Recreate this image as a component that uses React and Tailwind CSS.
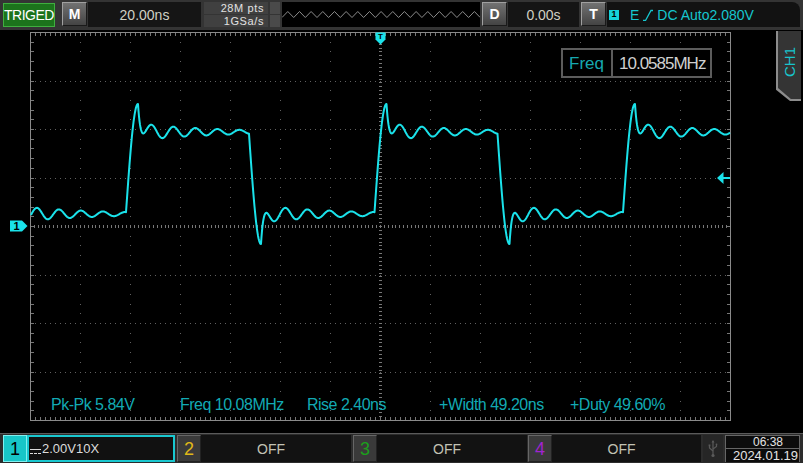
import React from "react";

const WAVE = "#1ae2ea";
const MEAS = "#12aab4";

const GX0 = 30;
const GX1 = 730;
const GY0 = 32;
const GY1 = 420;
const DIVX = 50;
const DIVY = 48.5;

// square wave with ringing, sampled in page coordinates
function wavePath() {
  const P = 248.5;
  const R0 = 130;
  const F0 = 253;
  const H = 132;
  const L = 214;
  const A = 9.5;
  const edges = [];
  for (let k = -2; k <= 3; k++) {
    edges.push({ x: R0 + k * P, rise: true });
    edges.push({ x: F0 + k * P, rise: false });
  }
  edges.sort((a, b) => a.x - b.x);

  const settled = (e, t) => {
    const ring =
      (e.rise ? 34.5 : 36.5) * Math.exp(-(t - 8) / 2.5) +
      A * Math.exp(-t / 75) * Math.cos((2 * Math.PI * (t - 21.5)) / 22);
    return e.rise ? H - ring : L + ring;
  };

  const yAt = (x) => {
    let i = edges.length - 1;
    while (i > 0 && edges[i].x - 4 > x) i--;
    const e = edges[i];
    const t = x - e.x;
    if (t >= 8) return settled(e, t);
    const p = edges[i - 1];
    const prev = settled(p, e.x - 4 - p.x);
    const peak = settled(e, 8);
    const s = Math.min(1, Math.max(0, (t + 4) / 12));
    return prev + (peak - prev) * Math.sin((s * Math.PI) / 2);
  };

  let d = "";
  for (let x = GX0 + 1; x <= GX1; x += 0.5) {
    d += `${d ? "L" : "M"}${x.toFixed(1)} ${yAt(x).toFixed(1)}`;
  }
  return d;
}

function gridDots() {
  let d = "";
  for (let k = 1; k < 14; k++) {
    if (k === 7) continue;
    const x = GX0 + k * DIVX;
    for (let j = 1; j < 40; j++) {
      const y = Math.round(GY0 + (j * DIVY) / 5);
      d += `M${x} ${y + 0.5}h1`;
    }
  }
  for (let k = 1; k < 8; k++) {
    if (k === 4) continue;
    const y = Math.round(GY0 + k * DIVY);
    for (let x = GX0 + 5; x < GX1; x += 5) {
      d += `M${x} ${y + 0.5}h1`;
    }
  }
  return d;
}

function gridTicks() {
  let d = "";
  for (let x = GX0 + 5; x < GX1; x += 5) {
    d += `M${x + 0.5} ${GY0 + 1}v3M${x + 0.5} ${GY1 - 3}v3`;
  }
  for (let j = 1; j < 40; j++) {
    const y = Math.round(GY0 + (j * DIVY) / 5) + 0.5;
    d += `M${GX0 + 1} ${y}h3M${GX1 - 3} ${y}h3`;
  }
  const cy = GY0 + 4 * DIVY;
  for (let x = GX0; x < GX1; x += DIVX / 13) {
    d += `M${Math.round(x) + 0.5} ${cy - 1}v3`;
  }
  const cx = GX0 + 7 * DIVX;
  for (let y = GY0; y < GY1; y += DIVY / 12.5) {
    d += `M${cx - 1} ${Math.round(y) + 0.5}h3`;
  }
  return d;
}

function Btn({ label }) {
  return (
    <div className="flex h-[24px] w-[25px] items-center justify-center border border-t-[#a0a0a0] border-l-[#a0a0a0] border-r-[#1a1a1a] border-b-[#1a1a1a] bg-linear-to-b from-[#727272] to-[#444] text-[14px] font-bold leading-none text-white">
      {label}
    </div>
  );
}

function TopBar() {
  let zig = "";
  for (let i = 0; i <= 34; i++) {
    zig += `${i ? "L" : "M"}${(i * 5.83).toFixed(1)} ${i % 2 ? 9.5 : 15.5}`;
  }
  return (
    <div className="flex h-[30px] shrink-0 items-start bg-[#343434] pl-[3px] pt-[2px]">
      <div className="mt-[1px] flex h-[24px] w-[52px] items-center justify-center border border-[#3fae3f] bg-[#1c731c] text-[14px] leading-none tracking-[-0.5px] text-white">
        TRIGED
      </div>
      <div className="ml-[7px]">
        <Btn label="M" />
      </div>
      <div className="ml-[1px] flex h-[25px] w-[113px] items-center justify-center bg-[#151515] text-[14px] leading-none text-[#d0d0c4]">
        20.00ns
      </div>
      <div className="ml-[3px] flex flex-col gap-[1px]">
        <div className="flex h-[12px] w-[64px] items-center justify-end bg-[#404040] pr-[4px] text-[11px] leading-none tracking-[0.6px] text-[#e2e2e2]">
          28M pts
        </div>
        <div className="flex h-[12px] w-[64px] items-center justify-end bg-[#404040] pr-[4px] text-[11px] leading-none tracking-[0.6px] text-[#e2e2e2]">
          1GSa/s
        </div>
      </div>
      <div className="ml-[2px] flex flex-col gap-[1px]">
        <div className="h-[12px] w-[10px] bg-[#4a4a4a]" />
        <div className="h-[12px] w-[10px] bg-[#4a4a4a]" />
      </div>
      <div className="ml-[2px] h-[25px] w-[198px] bg-black">
        <svg width="198" height="25" className="block">
          <path d={zig} fill="none" stroke="#8c8c8c" strokeWidth="1" />
        </svg>
      </div>
      <div className="ml-[2px]">
        <Btn label="D" />
      </div>
      <div className="ml-[1px] flex h-[25px] w-[71px] items-center justify-center bg-[#151515] text-[14px] leading-none text-[#d0d0c4]">
        0.00s
      </div>
      <div className="ml-[2px]">
        <Btn label="T" />
      </div>
      <div className="ml-[1px] flex h-[25px] w-[193px] items-center rounded-tr-[8px] bg-[#121212] pl-[2px] text-[14px] leading-none text-[#16c6ce]">
        <span className="flex h-[10px] w-[10px] items-center justify-center bg-[#16d2da] text-[9px] font-bold text-black">
          1
        </span>
        <span className="ml-[11px]">E</span>
        <svg width="12" height="12" viewBox="0 0 12 12" className="mx-[3px]">
          <path d="M1 11.5h2.5L9 1.5h2" fill="none" stroke="#16c6ce" strokeWidth="1.3" />
        </svg>
        <span>DC Auto2.080V</span>
      </div>
    </div>
  );
}

function Scope() {
  const cy = GY0 + 4 * DIVY;
  const trigY = GY0 + 3 * DIVY;
  return (
    <div className="relative h-[403px] w-[776px]">
      <svg width="776" height="403" viewBox="0 30 776 403" className="block">
        <rect x="0" y="30" width="776" height="403" fill="#000" />
        <path d={gridDots()} stroke="#606060" strokeWidth="1" />
        <path d={gridTicks()} stroke="#777" strokeWidth="1" />
        <rect
          x={GX0 + 0.5}
          y={GY0 + 0.5}
          width={GX1 - GX0}
          height={GY1 - GY0}
          fill="none"
          stroke="#8a8a8a"
          strokeWidth="1"
        />
        <path d={wavePath()} fill="none" stroke={WAVE} strokeWidth="2" strokeLinejoin="round" />
        {/* trigger position marker */}
        <path d="M375.5 32.5h10v7l-5 5l-5-5z" fill={WAVE} />
        <text x="380.5" y="39" textAnchor="middle" fontSize="8" fontWeight="bold" fill="#000" fontFamily="Liberation Sans, sans-serif">
          T
        </text>
        {/* CH1 ground marker */}
        <path d={`M10 ${cy - 5.5}h12l5.5 5.5l-5.5 5.5h-12z`} fill={WAVE} />
        <text x="16.5" y={cy + 4} textAnchor="middle" fontSize="11" fontWeight="bold" fill="#000" fontFamily="Liberation Sans, sans-serif">
          1
        </text>
        {/* trigger level */}
        <path d={`M717 ${trigY + 0.5}l6.5-6v12z`} fill={WAVE} />
        <path d={`M722 ${trigY + 0.5}h8`} stroke={WAVE} strokeWidth="2" />
      </svg>

      <div className="absolute left-[561px] top-[18px] flex h-[30px] w-[151px] items-center border-2 border-[#5c5c5c] bg-black">
        <div className="flex h-full w-[50px] items-center border-r-2 border-[#5c5c5c] pl-[6px] text-[17px] leading-none text-[#16a8b0]">
          Freq
        </div>
        <div className="pl-[6px] text-[17px] leading-none tracking-[-1px] text-[#cfcfcf]">10.0585MHz</div>
      </div>

      <div className="absolute left-[51px] top-[367px] text-[16px] leading-none tracking-[-0.5px]" style={{ color: MEAS }}>
        Pk-Pk 5.84V
      </div>
      <div className="absolute left-[180px] top-[367px] text-[16px] leading-none tracking-[-0.5px]" style={{ color: MEAS }}>
        Freq 10.08MHz
      </div>
      <div className="absolute left-[307px] top-[367px] text-[16px] leading-none tracking-[-0.5px]" style={{ color: MEAS }}>
        Rise 2.40ns
      </div>
      <div className="absolute left-[439px] top-[367px] text-[16px] leading-none tracking-[-0.5px]" style={{ color: MEAS }}>
        +Width 49.20ns
      </div>
      <div className="absolute left-[570px] top-[367px] text-[16px] leading-none tracking-[-0.5px]" style={{ color: MEAS }}>
        +Duty 49.60%
      </div>
    </div>
  );
}

function ChTab() {
  return (
    <div className="h-[70px] w-[25px] bg-[#8c8c8c] [clip-path:polygon(0_0,100%_0,100%_100%,56%_100%,0_84%)]">
      <div className="ml-[2px] flex h-[68px] w-[23px] items-center justify-center bg-[#343434] [clip-path:polygon(0_0,100%_0,100%_100%,56%_100%,0_84%)]">
        <span className="-mt-[6px] rotate-180 text-[15px] leading-none text-[#18c4cc] [writing-mode:vertical-rl]">
          CH1
        </span>
      </div>
    </div>
  );
}

function ChanNum({ n, color, active }) {
  return (
    <div
      className={
        active
          ? "flex h-[27px] w-[24px] items-center justify-center border border-[#7ff0f0] bg-[#17c6c8] text-[18px] leading-none text-black"
          : "flex h-[27px] w-[24px] items-center justify-center border border-t-[#666] border-l-[#666] border-r-[#222] border-b-[#222] bg-[#3a3a3a] text-[18px] leading-none"
      }
      style={active ? undefined : { color }}
    >
      {n}
    </div>
  );
}

function Off({ w }) {
  return (
    <div className={`flex h-[27px] ${w} items-center justify-center bg-[#121212] pr-[10px] text-[14px] leading-none text-[#c2c2b4]`}>
      OFF
    </div>
  );
}

function BottomBar() {
  return (
    <div className="flex h-[30px] shrink-0 items-start border-t border-[#5a5a5a] bg-[#2c2c2c] pl-[3px] pt-[1px]">
      <ChanNum n="1" active />
      <div className="flex h-[27px] w-[148px] items-center border-2 border-[#19c8d0] bg-[#111] pl-[1px] text-[13px] leading-none text-[#dcdcdc]">
        <svg width="11" height="7" viewBox="0 0 11 7" className="mt-[5px]">
          <path d="M0 1.5h11" stroke="#dcdcdc" strokeWidth="1" />
          <path d="M0 5.5h3M4 5.5h3M8 5.5h3" stroke="#dcdcdc" strokeWidth="1" />
        </svg>
        <span className="ml-[1px]">2.00V10X</span>
      </div>
      <div className="ml-[2px]">
        <ChanNum n="2" color="#e0b818" />
      </div>
      <Off w="w-[150px]" />
      <div className="ml-[2px]">
        <ChanNum n="3" color="#1c9e1c" />
      </div>
      <Off w="w-[150px]" />
      <div className="ml-[1px]">
        <ChanNum n="4" color="#a024d0" />
      </div>
      <Off w="w-[149px]" />
      <div className="ml-[2px] flex h-[27px] w-[20px] items-center justify-center bg-[#262626]">
        <svg width="10" height="18" viewBox="0 0 10 18">
          <g stroke="#5a5a5a" strokeWidth="1.2" fill="none">
            <path d="M5 1v14" />
            <path d="M5 11L1.5 8V6M5 9l3.5-2.5V5" />
          </g>
          <path d="M5 0l-1.5 2.5h3z" fill="#5a5a5a" />
          <circle cx="5" cy="15.5" r="1.6" fill="#5a5a5a" />
          <rect x="0.6" y="4.5" width="1.8" height="1.8" fill="#5a5a5a" />
          <circle cx="8.5" cy="4.3" r="0.9" fill="#5a5a5a" />
        </svg>
      </div>
      <div className="ml-[2px] flex h-[27px] w-[75px] flex-col gap-px border border-[#666] bg-[#666]">
        <div className="flex flex-1 items-center justify-end bg-[#0c0c0c] pr-[16px] text-[12px] leading-none text-[#e4e4e4]">
          06:38
        </div>
        <div className="flex flex-1 items-center justify-end bg-[#0c0c0c] pr-[1px] text-[13px] leading-none text-[#e4e4e4]">
          2024.01.19
        </div>
      </div>
    </div>
  );
}

export default function App() {
  return (
    <div className="flex h-[463px] w-[803px] flex-col overflow-hidden bg-black font-['Liberation_Sans',Arial,sans-serif]">
      <TopBar />
      <div className="flex h-[403px]">
        <Scope />
        <div className="w-[27px] pt-[1px]">
          <ChTab />
        </div>
      </div>
      <BottomBar />
    </div>
  );
}
